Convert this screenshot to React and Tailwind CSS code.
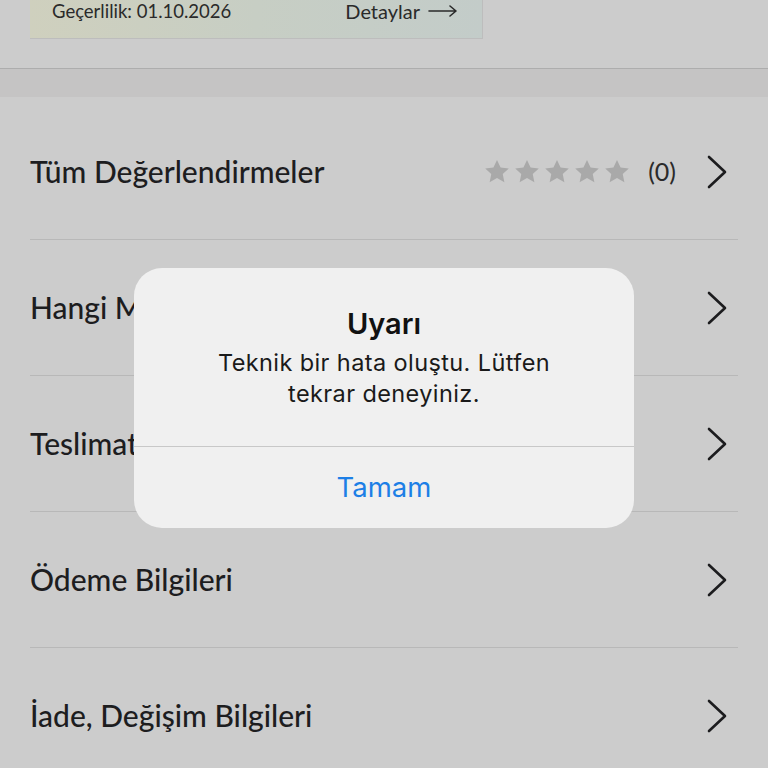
import { useState } from 'react'

const satirlar = [
  { baslik: 'Tüm Değerlendirmeler', puan: true },
  { baslik: 'Hangi Mağazalarda Var?' },
  { baslik: 'Teslimat Bilgileri' },
  { baslik: 'Ödeme Bilgileri' },
  { baslik: 'İade, Değişim Bilgileri' },
]

function Chevron() {
  return (
    <svg width="22" height="34" viewBox="0 0 22 34" fill="none" className="shrink-0">
      <path d="M3 2 L19 17 L3 32" stroke="#1c1c1e" strokeWidth="2.6" strokeLinecap="round" strokeLinejoin="round" />
    </svg>
  )
}

function Yildiz() {
  return (
    <svg width="26" height="25" viewBox="0 0 24 23">
      <path d="M12 0.8l3.3 7 7.6 0.9-5.6 5.2 1.5 7.6L12 17.6l-6.8 3.9 1.5-7.6L1.1 8.7l7.6-0.9z" fill="#a9a9a9" />
    </svg>
  )
}

export default function App() {
  const [acik, setAcik] = useState(true)

  return (
    <div className="relative min-h-[768px] h-[768px] overflow-hidden bg-[#cccccc] font-['Lato',sans-serif] text-[#1d1d1f]">
      <div className="px-[30px]">
        <div className="w-[453px] h-[39px] flex items-start justify-between pl-[22px] pr-[24px] bg-gradient-to-r from-[#cfd0be] via-[#c7cec4] to-[#c3ccc9] border-b border-r border-[#bdbdbd]">
          <span className="text-[18.5px] leading-[22px] text-[#2a2a2a]">Geçerlilik: 01.10.2026</span>
          <span className="flex items-center gap-2 text-[20px] leading-[22px] text-[#2a2a2a]">
            Detaylar
            <svg width="30" height="12" viewBox="0 0 30 12" fill="none">
              <path d="M1 6 H28 M22 1 L28 6 L22 11" stroke="#2a2a2a" strokeWidth="1.6" strokeLinecap="round" strokeLinejoin="round" />
            </svg>
          </span>
        </div>
      </div>

      <div className="mt-[29px] border-t border-[#adadad] h-[29px] bg-[#c5c4c4]" />

      <div className="mt-[7px] px-[30px]">
        {satirlar.map((s, i) => (
          <div key={s.baslik} className={i > 0 ? 'border-t border-[#b8b8b8]' : ''}>
            <div className="h-[135px] flex items-center justify-between">
              <span className="text-[30px] font-medium">{s.baslik}</span>
              <div className="flex items-center">
                {s.puan && (
                  <div className="flex items-center mr-[30px]">
                    <div className="flex items-center gap-[4px] mr-[18px]">
                      <Yildiz />
                      <Yildiz />
                      <Yildiz />
                      <Yildiz />
                      <Yildiz />
                    </div>
                    <span className="text-[25px] text-[#2a2a2a]">(0)</span>
                  </div>
                )}
                <div className="mr-[10px]">
                  <Chevron />
                </div>
              </div>
            </div>
          </div>
        ))}
      </div>

      {acik && (
        <div className="absolute left-[134px] top-[268px] w-[500px] h-[260px] rounded-[28px] bg-[#f0f0f0] flex flex-col font-['Inter',sans-serif]">
          <div className="h-[178px] flex flex-col items-center pt-[37px] px-6 text-center">
            <div className="text-[29px] font-semibold text-[#111] leading-[38px]">Uyarı</div>
            <div className="mt-[4px] text-[23.5px] leading-[31px] text-[#1a1a1a] tracking-[0.4px]">
              Teknik bir hata oluştu. Lütfen
              <br />
              tekrar deneyiniz.
            </div>
          </div>
          <div className="border-t border-[#c8c8c8]" />
          <button
            onClick={() => setAcik(false)}
            className="flex-1 flex items-center justify-center text-[27.5px] text-[#1d7fe6]"
          >
            Tamam
          </button>
        </div>
      )}
    </div>
  )
}
